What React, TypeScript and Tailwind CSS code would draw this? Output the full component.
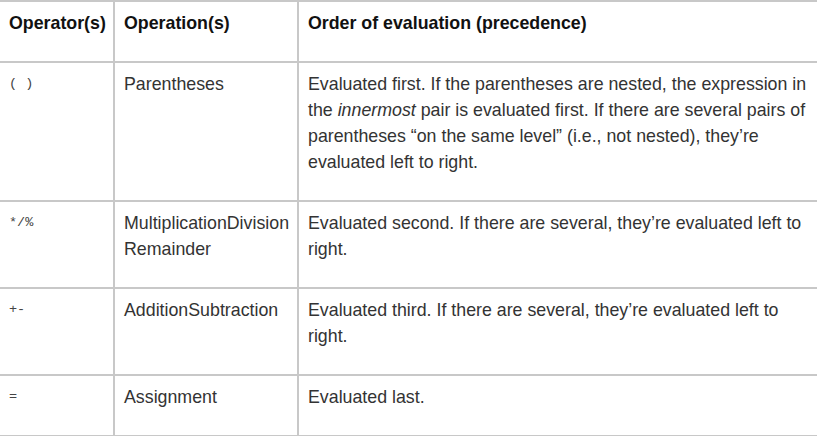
import React from "react";

const rows: { op: string; name: React.ReactNode; desc: React.ReactNode }[] = [
  {
    op: "( )",
    name: "Parentheses",
    desc: (
      <>
        Evaluated first. If the parentheses are nested, the expression in the <em>innermost</em> pair is
        evaluated first. If there are several pairs of parentheses “on the same level” (i.e., not nested),
        they’re evaluated left to right.
      </>
    ),
  },
  {
    op: "*/%",
    name: "MultiplicationDivision Remainder",
    desc: "Evaluated second. If there are several, they’re evaluated left to right.",
  },
  {
    op: "+-",
    name: "AdditionSubtraction",
    desc: "Evaluated third. If there are several, they’re evaluated left to right.",
  },
  {
    op: "=",
    name: "Assignment",
    desc: "Evaluated last.",
  },
];

export default function App() {
  return (
    <div className="w-[817px] h-[436px] overflow-hidden bg-white" style={{ fontFamily: "'Liberation Sans', Arial, sans-serif" }}>
      <div className="grid grid-cols-[115px_184px_530px] border-t-2 border-[#c8c8c8] text-[17.8px] leading-[26px] text-[#333]">
        <div className="border-r-2 border-b-2 border-[#c8c8c8] pl-[9px] pt-[8px] pb-[25px] font-bold text-[#111]">Operator(s)</div>
        <div className="border-r-2 border-b-2 border-[#c8c8c8] pl-[9px] pt-[8px] pb-[25px] font-bold text-[#111]">Operation(s)</div>
        <div className="border-b-2 border-[#c8c8c8] pl-[9px] pr-[14px] pt-[8px] pb-[25px] font-bold text-[#111]">Order of evaluation (precedence)</div>
        {rows.map((r, i) => (
          <React.Fragment key={i}>
            <div
              className="border-r-2 border-b-2 border-[#c8c8c8] pl-[9px] pt-[8px] pb-[25px] text-[13.5px] text-[#444]"
              style={{ fontFamily: "'Liberation Mono', 'Courier New', monospace" }}
            >
              {r.op}
            </div>
            <div className="border-r-2 border-b-2 border-[#c8c8c8] pl-[9px] pr-[1px] pt-[8px] pb-[25px]">{r.name}</div>
            <div className="border-b-2 border-[#c8c8c8] pl-[9px] pr-[14px] pt-[8px] pb-[25px]">{r.desc}</div>
          </React.Fragment>
        ))}
      </div>
    </div>
  );
}
